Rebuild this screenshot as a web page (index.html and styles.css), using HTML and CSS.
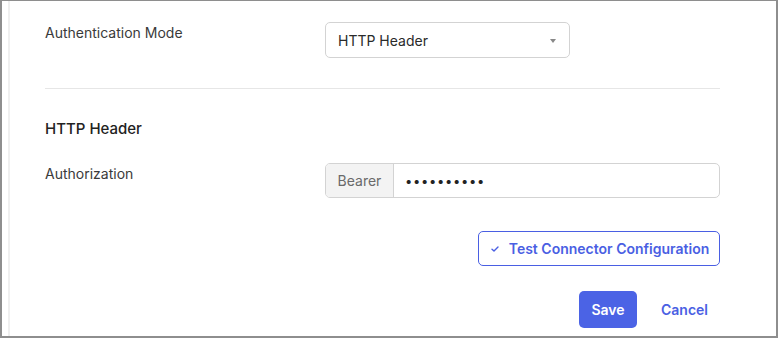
FILE: index.html
```html
<!DOCTYPE html>
<html lang="en">
<head>
<meta charset="utf-8">
<title>Connector Configuration</title>
<link rel="stylesheet" href="styles.css">
</head>
<body>
<div class="frame">
  <div class="panel">
    <div class="row row-mode">
      <div class="label">Authentication Mode</div>
      <div class="field">
        <div class="select">
          <span>HTTP Header</span>
          <svg class="caret" width="6" height="4" viewBox="0 0 6 4"><path d="M0 0 H6 L3 4 Z" fill="#888"/></svg>
        </div>
      </div>
    </div>
    <div class="divider"></div>
    <h3 class="section-title">HTTP Header</h3>
    <div class="row">
      <div class="label">Authorization</div>
      <div class="field">
        <div class="input-group">
          <span class="addon">Bearer</span>
          <span class="value">&bull;&bull;&bull;&bull;&bull;&bull;&bull;&bull;&bull;&bull;</span>
        </div>
      </div>
    </div>
    <div class="actions-test">
      <button class="btn-outline" type="button">
        <svg class="check" width="8" height="6" viewBox="0 0 8 6"><path d="M1 3.2 L3 5 L7 1" fill="none" stroke="#4a5fe3" stroke-width="1.4" stroke-linecap="round" stroke-linejoin="round"/></svg>
        Test Connector Configuration
      </button>
    </div>
    <div class="actions">
      <button class="btn-primary" type="button">Save</button>
      <button class="btn-link" type="button">Cancel</button>
    </div>
  </div>
</div>
</body>
</html>
```
FILE: styles.css
```css
* { box-sizing: border-box; }
html, body { margin: 0; padding: 0; background: #fff; }
body {
  font-family: Inter, "Noto Sans", "Liberation Sans", sans-serif;
  color: #333;
}
.frame {
  width: 778px;
  height: 338px;
  border: 2px solid #8e8e8e;
  border-top-width: 1px;
  background: #fff;
  overflow: hidden;
}
.panel {
  margin-left: 6px;
  height: 100%;
  border-left: 2px solid #efefef;
  padding: 21px 56px 0 35px;
}
.row {
  display: grid;
  grid-template-columns: 280px 1fr;
  align-items: start;
}
.label {
  font-size: 14px;
  line-height: 20px;
  padding-top: 1px;
  color: #3a3a3a;
}
.select {
  width: 245px;
  height: 36px;
  border: 1px solid #d3d3d3;
  border-radius: 5px;
  display: flex;
  align-items: center;
  justify-content: space-between;
  padding: 0 13px 0 12px;
  font-size: 14px;
  color: #2a2a2a;
}
.caret { margin-top: 1px; }
.divider {
  height: 1px;
  background: #e6e6e6;
  margin-top: 30px;
}
.section-title {
  margin: 29px 0 23px;
  font-size: 15px;
  line-height: 22px;
  font-weight: 500;
  color: #222;
}
.input-group {
  display: flex;
  height: 35px;
  border: 1px solid #d3d3d3;
  border-radius: 5px;
  overflow: hidden;
}
.addon {
  width: 68px;
  background: #f3f3f3;
  border-right: 1px solid #d3d3d3;
  display: flex;
  align-items: center;
  justify-content: center;
  font-size: 14px;
  color: #6a6a6a;
}
.value {
  display: flex;
  align-items: center;
  padding-left: 11px;
  font-size: 13px;
  letter-spacing: 0.7px;
  color: #222;
}
.actions-test {
  display: flex;
  justify-content: flex-end;
  margin-top: 33px;
}
.btn-outline {
  height: 35px;
  width: 242px;
  border: 1px solid #4a5fe3;
  border-radius: 5px;
  background: #fff;
  color: #4a5fe3;
  font-family: inherit;
  font-size: 14px;
  font-weight: 600;
  display: flex;
  align-items: center;
  justify-content: center;
  gap: 10px;
  padding: 0 0 0 2px;
}
.actions {
  display: flex;
  justify-content: flex-end;
  align-items: center;
  margin-top: 25px;
  gap: 12px;
}
.btn-primary {
  width: 58px;
  height: 37px;
  border: none;
  border-radius: 5px;
  background: #4b63e5;
  color: #fff;
  font-family: inherit;
  font-size: 14px;
  font-weight: 600;
  padding: 0;
}
.btn-link {
  border: none;
  background: none;
  color: #4a5fe3;
  font-family: inherit;
  font-size: 14px;
  font-weight: 600;
  padding: 0 12px;
  height: 37px;
}
```
